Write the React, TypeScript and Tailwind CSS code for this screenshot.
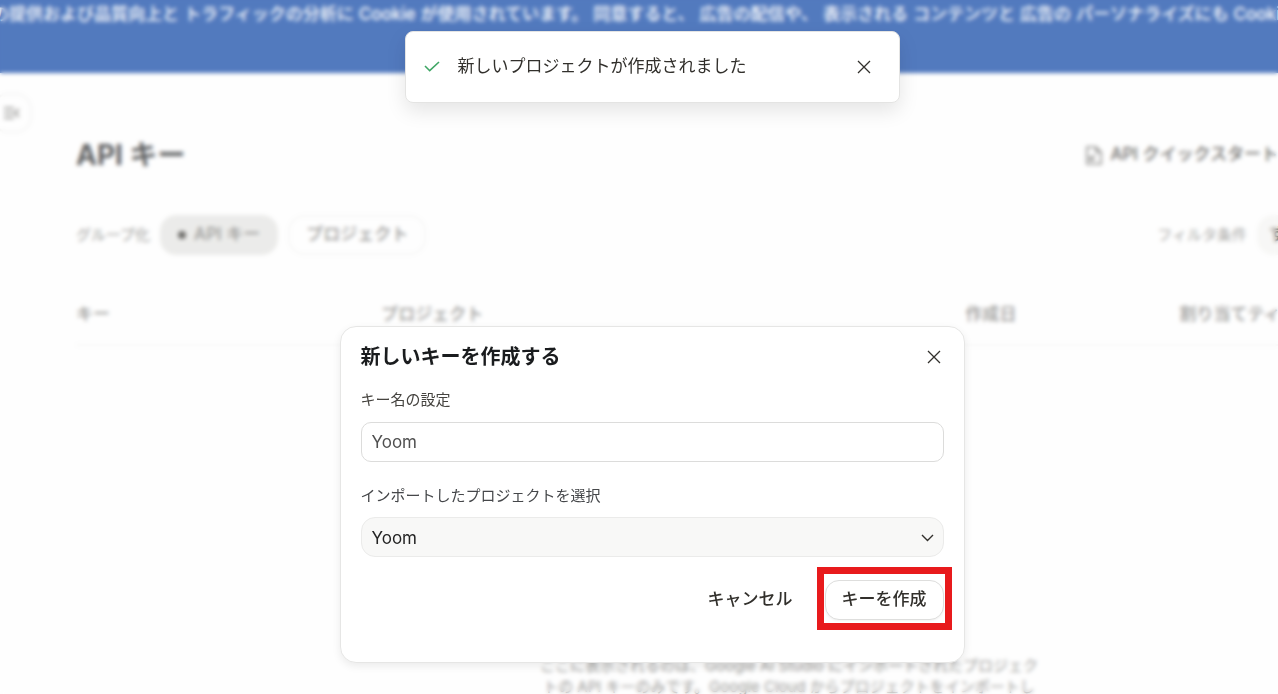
import React, { useState } from "react";

const notice = [
  "の提供および品質向上と",
  "トラフィックの分析に",
  "Cookie",
  "が使用されています。",
  "同意すると、",
  "広告の配信や、",
  "表示される",
  "コンテンツと",
  "広告の",
  "パーソナライズにも",
  "Cookie",
];

const columns = [
  { label: "キー", width: "w-[25.4%]" },
  { label: "プロジェクト", width: "w-[48.6%]" },
  { label: "作成日", width: "w-[17.8%]" },
  { label: "割り当てティ", width: "" },
];

const CloseIcon: React.FC = () => (
  <svg width="14" height="14" viewBox="0 0 14 14" fill="none" stroke="#32302c" strokeWidth="1.3">
    <path d="M1 1l12 12M13 1L1 13" />
  </svg>
);

const Page: React.FC = () => {
  return (
    <div className="h-screen overflow-hidden bg-[#fefefe] text-[#32302c]">
      <div className="h-[73px] bg-[#0841a3] text-[17px] leading-7 font-medium text-white whitespace-nowrap">
        <p className="-ml-2 flex gap-[5px]">
          {notice.map((phrase, i) => (
            <span key={i}>{phrase}</span>
          ))}
        </p>
      </div>

      <button
        aria-label="メニューを開く"
        className="mt-5 -ml-2 flex h-10 w-10 items-center justify-center rounded-2xl border-2 border-[#f0f0ef] bg-[#fefefe]"
      >
        <svg width="16" height="12" viewBox="0 0 16 12" fill="none" stroke="#7c7b78" strokeWidth="2">
          <path d="M0 1h10M0 6h10M0 11h10M15 2l-4 4 4 4" />
        </svg>
      </button>

      <div className="pl-[76px]">
        <div className="flex h-11 items-center justify-between whitespace-nowrap">
          <h1 className="text-[28px] font-bold text-[#1a1c1e]">API キー</h1>
          <a href="#quickstart" className="flex items-center gap-2 text-[17px] font-medium">
            <svg width="16" height="19" viewBox="0 0 16 19" fill="none" stroke="#5c5b58" strokeWidth="1.6">
              <path d="M1 1h9l5 5v12H1zM10 1v5h5M4 14l5-5M4 10v4h5" />
            </svg>
            API クイックスタート
          </a>
        </div>

        <div className="mt-[38px] -mr-5 flex items-center justify-between whitespace-nowrap">
          <div className="flex items-center gap-[10px]">
            <span className="text-[15px] text-[#6d6c69]">グループ化</span>
            <button className="flex h-10 items-center gap-2 rounded-2xl bg-[#e3e3e1] px-[18px] text-[17px] font-medium text-[#6d6c69]">
              <span className="h-2 w-2 rounded-full bg-[#32302c]" />
              API キー
            </button>
            <button className="h-10 rounded-2xl border-2 border-[#f3f3f2] bg-[#fefefe] px-4 text-[17px] font-medium text-[#6d6c69]">
              プロジェクト
            </button>
          </div>
          <div className="flex items-center gap-[10px]">
            <span className="text-[15px] text-[#7c7b78]">フィルタ条件</span>
            <button className="h-10 rounded-l-2xl bg-[#f4f4f2] px-3 text-[17px] font-medium">す</button>
          </div>
        </div>

        <table className="mt-7 w-full table-fixed border-b-2 border-[#f3f3f2] whitespace-nowrap">
          <thead>
            <tr className="h-[62px] text-left text-[17px] text-[#6d6c69]">
              {columns.map((column) => (
                <th key={column.label} className={`pt-[3px] font-medium ${column.width}`}>
                  {column.label}
                </th>
              ))}
            </tr>
          </thead>
        </table>

        <p className="mt-[309px] -mr-[224px] text-center text-[15px] leading-[21px] text-[#6d6c69]">
          ここに表示されるのは、Google AI Studio にインポートされたプロジェク
          <br />
          トの API キーのみです。Google Cloud からプロジェクトをインポートし
        </p>
      </div>
    </div>
  );
};

const Toast: React.FC = () => {
  return (
    <div
      role="status"
      className="flex h-[72px] w-full max-w-[495px] items-center rounded-lg border border-[#e4e4e3] bg-white pr-7 pl-[18px] shadow-[0_8px_20px_rgba(0,0,0,0.10)]"
    >
      <svg width="16" height="12" viewBox="0 0 16 12" fill="none" stroke="#3fa665" strokeWidth="1.6">
        <path d="M1 5l4.700 4.700L15 1" />
      </svg>
      <p className="ml-[18px] flex-1 text-[17px] text-[#32302c]">
        新しいプロジェクトが作成されました
      </p>
      <button aria-label="通知を閉じる">
        <CloseIcon />
      </button>
    </div>
  );
};

const CreateKeyDialog: React.FC = () => {
  const [name, setName] = useState("Yoom");

  return (
    <div
      role="dialog"
      aria-labelledby="dialog-title"
      className="w-full max-w-[625px] rounded-2xl border border-[#e6e6e5] bg-white px-5 pt-3 pb-[42px] shadow-[0_3px_8px_rgba(0,0,0,0.08)]"
    >
      <div className="flex h-9 items-center justify-between">
        <h2 id="dialog-title" className="text-xl font-bold text-[#1a1c1e]">
          新しいキーを作成する
        </h2>
        <button aria-label="閉じる" className="flex h-5 w-5 items-center justify-center">
          <CloseIcon />
        </button>
      </div>

      <label htmlFor="key-name" className="mt-[15px] block text-[15px] leading-5 text-[#45433f]">
        キー名の設定
      </label>
      <input
        id="key-name"
        type="text"
        value={name}
        onChange={(e) => setName(e.target.value)}
        className="mt-3 block h-10 w-full rounded-[10px] border border-[#dcdcdb] bg-white px-[10px] text-[17px] text-[#505050] outline-none"
      />

      <label htmlFor="project" className="mt-6 block text-[15px] leading-5 text-[#45474a]">
        インポートしたプロジェクトを選択
      </label>
      <div className="relative mt-[11px]">
        <select
          id="project"
          className="block h-10 w-full appearance-none rounded-[14px] border border-[#ebebea] bg-[#f8f8f7] px-[10px] pt-[3px] text-[17px] text-[#242424] outline-none"
        >
          <option>Yoom</option>
        </select>
        <svg
          className="pointer-events-none absolute top-[17px] right-[10px]"
          width="13"
          height="8"
          viewBox="0 0 13 8"
          fill="none"
          stroke="#32302c"
          strokeWidth="1.4"
        >
          <path d="M1 1l5.500 5.500L12 1" />
        </svg>
      </div>

      <div className="mt-[23px] flex items-center justify-end gap-4 text-[17px] font-medium text-[#32302c]">
        <button className="h-10 px-4">キャンセル</button>
        <div className="relative">
          <button className="h-10 rounded-[14px] border border-[#dededd] bg-white px-4 shadow-xs">
            キーを作成
          </button>
          <span className="pointer-events-none absolute -top-[13px] -right-2 -bottom-[10px] -left-2 border-7 border-[#e81a1c]" />
        </div>
      </div>
    </div>
  );
};

const App: React.FC = () => {
  return (
    <div className="relative font-[Inter,'Noto_Sans_CJK_JP',sans-serif]">
      <Page />
      <div className="absolute inset-0 flex flex-col items-center bg-white/30 pt-[31px] pl-[26px] backdrop-blur-[2px]">
        <Toast />
        <div className="mt-[223px] flex w-full justify-center">
          <CreateKeyDialog />
        </div>
      </div>
    </div>
  );
};

export default App;
